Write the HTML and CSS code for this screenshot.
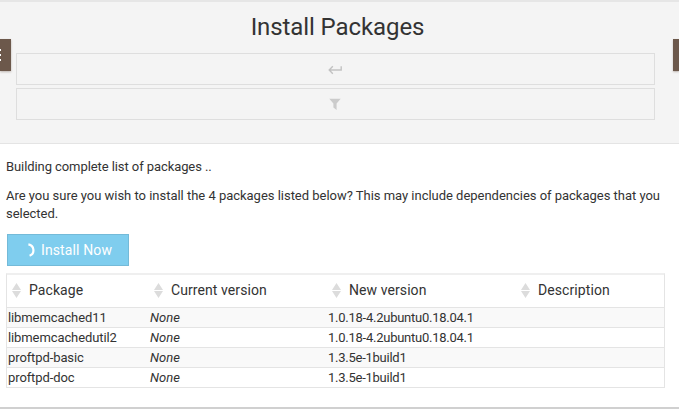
FILE: index.html
```
<!DOCTYPE html>
<html lang="en">
<head>
<meta charset="utf-8">
<title>Install Packages</title>
<link rel="stylesheet" href="styles.css">
</head>
<body>
<header class="heading">
  <h1>Install Packages</h1>
  <div class="tool tool-back">
    <svg width="14" height="10" viewBox="0 0 14 10"><path d="M4.8 1.2 1.2 5 4.8 8.8M1.5 5H13.2V1.2" fill="none" stroke="#c2c2c2" stroke-width="1.4"/></svg>
  </div>
  <div class="tool tool-filter">
    <svg width="12" height="12" viewBox="0 0 12 12"><path d="M.3.8H11.7L7.6 5.4V12L4.4 9.4V5.4Z" fill="#cbcbcb"/></svg>
  </div>
</header>
<div class="tab tab-left"><i></i><i></i><i></i></div>
<div class="tab tab-right"></div>
<main class="content">
  <p class="status">Building complete list of packages ..</p>
  <p class="question">Are you sure you wish to install the 4 packages listed below? This may include dependencies of packages that you selected.</p>
  <button class="install" type="button">
    <svg width="9" height="15" viewBox="0 0 9 15"><path d="M.4 1.3A6 6 0 0 1 1.6 12.8" fill="none" stroke="#fff" stroke-width="2.2"/></svg>
    <span>Install Now</span>
  </button>
  <table class="packages">
    <colgroup><col class="c1"><col class="c2"><col class="c3"><col></colgroup>
    <thead>
      <tr>
        <th><div class="sort"><svg width="9" height="15" viewBox="0 0 9 15"><path d="M0 7 4.5 0 9 7ZM0 8H9L4.5 15Z" fill="#dcdcdc"/></svg><span>Package</span></div></th>
        <th><div class="sort"><svg width="9" height="15" viewBox="0 0 9 15"><path d="M0 7 4.5 0 9 7ZM0 8H9L4.5 15Z" fill="#dcdcdc"/></svg><span>Current version</span></div></th>
        <th><div class="sort"><svg width="9" height="15" viewBox="0 0 9 15"><path d="M0 7 4.5 0 9 7ZM0 8H9L4.5 15Z" fill="#dcdcdc"/></svg><span>New version</span></div></th>
        <th><div class="sort"><svg width="9" height="15" viewBox="0 0 9 15"><path d="M0 7 4.5 0 9 7ZM0 8H9L4.5 15Z" fill="#dcdcdc"/></svg><span>Description</span></div></th>
      </tr>
    </thead>
    <tbody>
      <tr><td>libmemcached11</td><td><em>None</em></td><td class="version">1.0.18-4.2ubuntu0.18.04.1</td><td></td></tr>
      <tr><td>libmemcachedutil2</td><td><em>None</em></td><td class="version">1.0.18-4.2ubuntu0.18.04.1</td><td></td></tr>
      <tr><td>proftpd-basic</td><td><em>None</em></td><td class="version">1.3.5e-1build1</td><td></td></tr>
      <tr><td>proftpd-doc</td><td><em>None</em></td><td class="version">1.3.5e-1build1</td><td></td></tr>
    </tbody>
  </table>
</main>
</body>
</html>
```
FILE: styles.css
```
* { box-sizing: border-box; }
body {
  margin: 0;
  height: 409px;
  overflow: hidden;
  border-top: 2px solid #e6e6e6;
  border-bottom: 2px solid #d0d0d0;
  background: #fff;
  color: #333;
  font: 13px/18px Roboto, "Liberation Sans", sans-serif;
}
svg { display: block; flex: none; }
.heading {
  height: 142px;
  padding: 9px 24px 0 16px;
  background: #f4f4f4;
  border-bottom: 1px solid #e4e4e4;
}
h1 {
  margin: 0 0 10px;
  padding-left: 4px;
  font-size: 24px;
  line-height: 32px;
  font-weight: 400;
  letter-spacing: -0.09px;
  text-align: center;
}
.tool {
  display: flex;
  align-items: center;
  justify-content: center;
  height: 32px;
  margin-bottom: 3px;
  border: 1px solid #dedede;
}
.tool-back { padding: 1px 2px 0 0; }
.tool-filter { padding-right: 1px; }
.tab {
  position: absolute;
  top: 39px;
  height: 32px;
  background: #6c584b;
  box-shadow: 0 1px 2px rgba(108, 88, 75, 0.4);
}
.tab-left {
  left: 0;
  width: 11px;
  display: flex;
  flex-direction: column;
  gap: 3px;
  padding-top: 10px;
}
.tab-left i { width: 1px; height: 2px; background: #fff; }
.tab-right { left: 673px; width: 6px; }
.content { padding: 14px 14px 0 6px; }
p { margin: 0 0 11px; }
.status { letter-spacing: -0.08px; }
.question { letter-spacing: -0.02px; }
.install {
  display: flex;
  align-items: center;
  gap: 4px;
  width: 122px;
  height: 32px;
  margin: 0 0 7px 1px;
  padding: 0 0 0 20px;
  background: #7fcdee;
  border: 1px solid #74bad8;
  color: #fff;
  font: 14px/20px Roboto, "Liberation Sans", sans-serif;
  letter-spacing: 0.12px;
}
.packages {
  width: 659px;
  table-layout: fixed;
  border-spacing: 0;
  border: 1px solid #e4e4e4;
  border-top: 2px solid #efefef;
}
.c1 { width: 142px; }
.c2 { width: 178px; }
.c3 { width: 189px; }
th { height: 33px; padding: 0 0 0 5px; border-bottom: 1px solid #e4e4e4; font-size: 14px; font-weight: 400; text-align: left; letter-spacing: 0.08px; }
.sort { display: flex; align-items: center; gap: 8px; }
.sort span { padding-bottom: 2px; }
.sort svg { margin-bottom: 1px; }
td { height: 20px; padding: 0 0 0 1px; border-bottom: 1px solid #e4e4e4; line-height: 18px; white-space: nowrap; letter-spacing: -0.1px; }
td em { letter-spacing: 0; }
.version { letter-spacing: -0.25px; }
tbody tr:nth-child(odd) { background: #f9f9f9; }
tbody tr:last-child td { height: 19px; border-bottom: 0; }
```
